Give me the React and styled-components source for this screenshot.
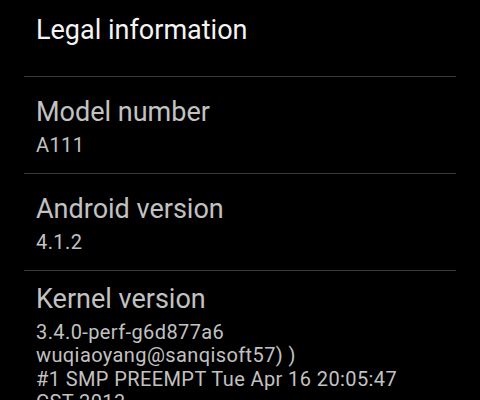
import React from "react";
import styled, { createGlobalStyle } from "styled-components";

const GlobalStyle = createGlobalStyle`
  html, body {
    margin: 0;
    padding: 0;
    background: #000;
  }
  body {
    font-family: Roboto, "Liberation Sans", sans-serif;
    overflow: hidden;
  }
`;

const aboutItems = [
  { title: "Legal information", enabled: true },
  { title: "Model number", summary: "A111" },
  { title: "Android version", summary: "4.1.2" },
  {
    title: "Kernel version",
    summary:
      "3.4.0-perf-g6d877a6\nwuqiaoyang@sanqisoft57) )\n#1 SMP PREEMPT Tue Apr 16 20:05:47 CST 2013",
  },
];

const App = () => {
  const rows = aboutItems.map((item, index) => (
    <li key={index}>
      {index > 0 && <Styled_Divider />}
      <Styled_Item>
        <Styled_Title $enabled={item.enabled}>{item.title}</Styled_Title>
        {item.summary && <Styled_Summary>{item.summary}</Styled_Summary>}
      </Styled_Item>
    </li>
  ));

  return (
    <Styled_Screen>
      <GlobalStyle />
      {/* list is scrolled a little, so the first row is partly off screen */}
      <Styled_List>{rows}</Styled_List>
    </Styled_Screen>
  );
};

const Styled_Screen = styled.div`
  width: 480px;
  height: 400px;
  background: #000;
  overflow: hidden;
`;

const Styled_List = styled.ul`
  list-style-type: none;
  margin: -20px 24px 0 24px;
  padding: 0;
`;

const Styled_Divider = styled.div`
  height: 1px;
  background: #3a3a3a;
`;

const Styled_Item = styled.div`
  box-sizing: border-box;
  min-height: 96px;
  padding: 12.5px 32px 8px 12px;
  display: flex;
  flex-direction: column;
  justify-content: center;
`;

const Styled_Title = styled.div`
  font-size: 27px;
  line-height: 31px;
  color: ${(p) => (p.$enabled ? "#f4f4f4" : "#c2c2c2")};
  white-space: nowrap;
`;

const Styled_Summary = styled.div`
  margin-top: 6px;
  font-size: 20px;
  line-height: 23.5px;
  letter-spacing: 0.4px;
  color: #c2c2c2;
  white-space: pre-line;
`;

export default App;
